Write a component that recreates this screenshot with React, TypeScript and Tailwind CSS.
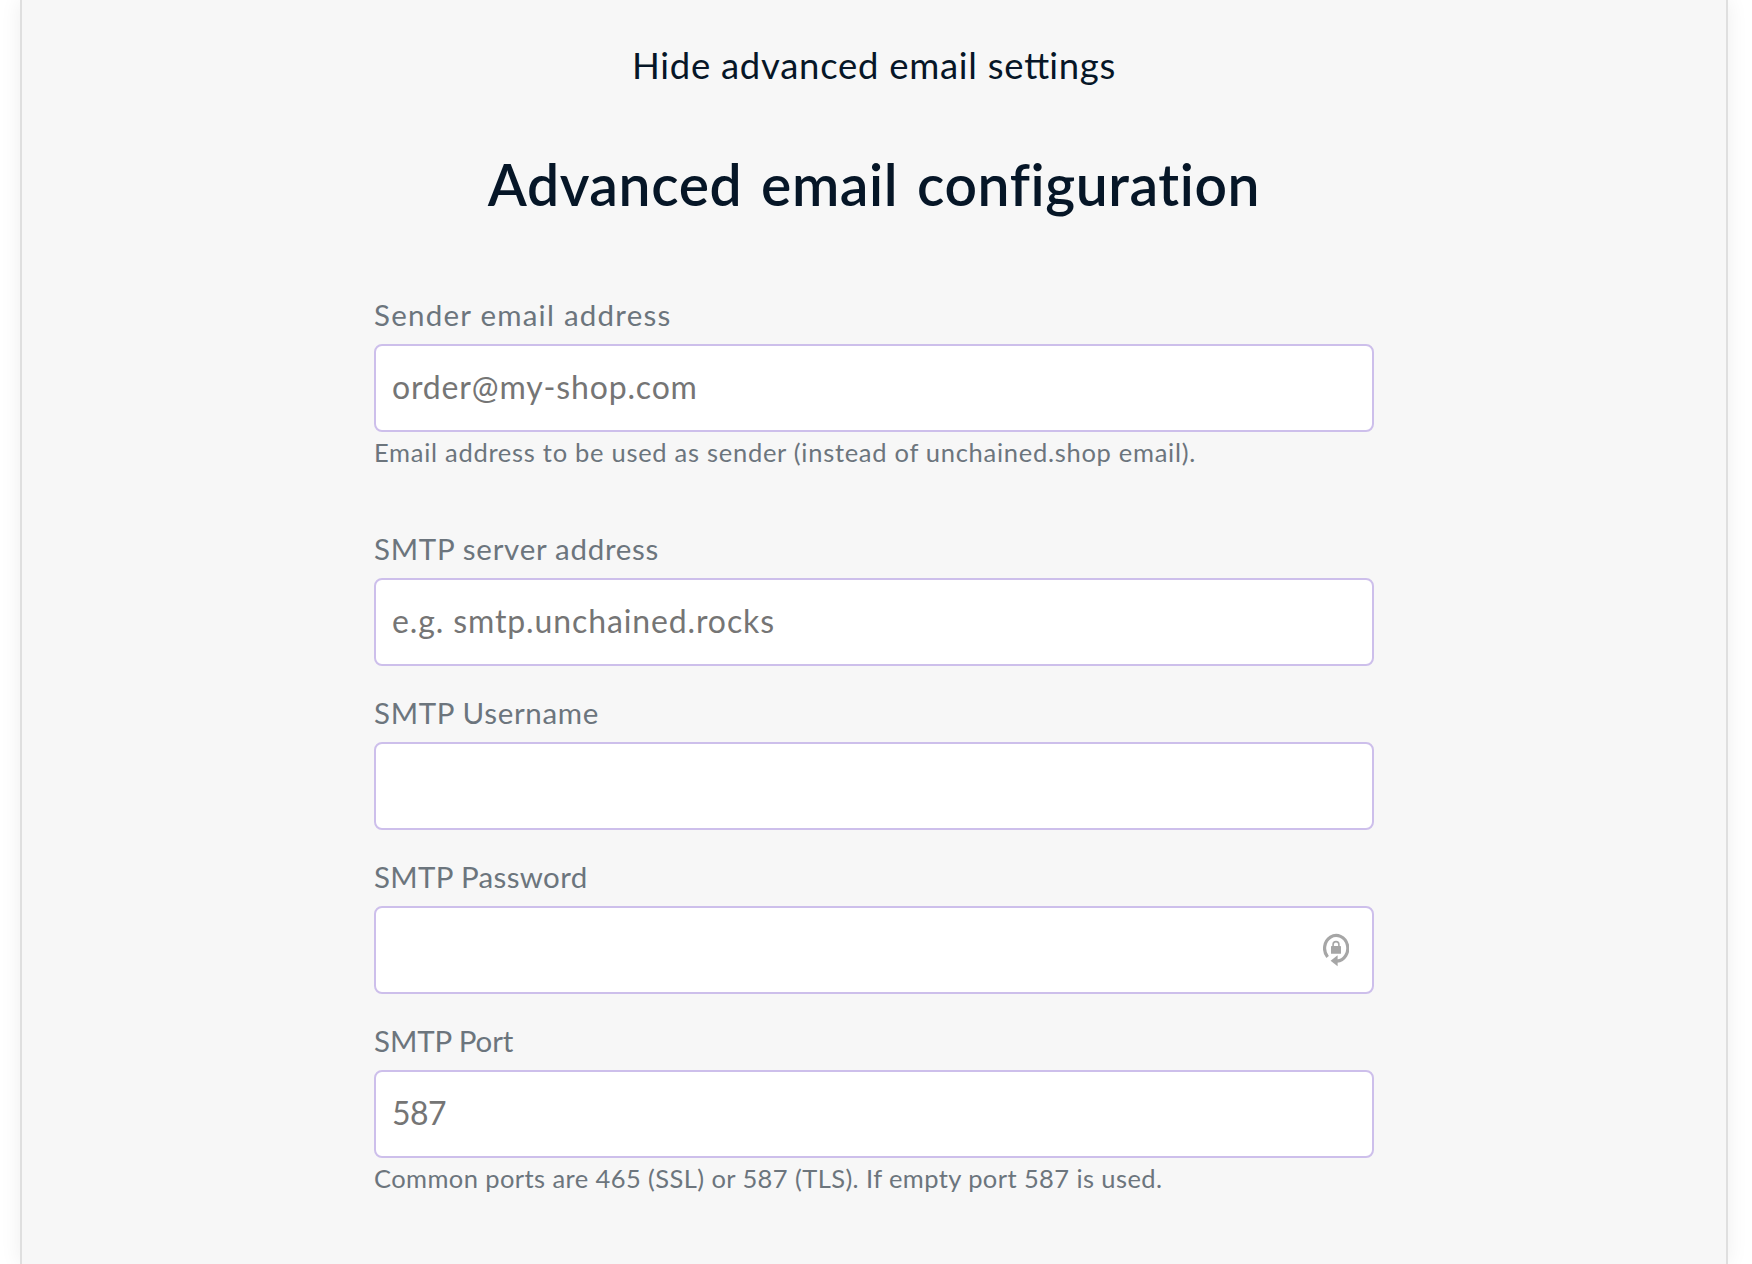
import React from "react";

type FieldProps = {
  id: string;
  label: string;
  labelClass: string;
  type?: string;
  placeholder?: string;
  inputClass?: string;
  help?: string;
  helpClass?: string;
  icon?: React.ReactNode;
};

function PasswordIcon() {
  return (
    <svg
      className="pointer-events-none absolute top-[27px] right-[25px] h-[34px] w-[26px]"
      viewBox="0 0 26 34"
      fill="none"
      aria-hidden="true"
    >
      <path
        d="M4.6 24A11.6 12.9 0 1 1 14 28.2"
        stroke="#a6a6a6"
        strokeWidth="3.2"
      />
      <path d="M7.6 27.8L14.6 22.2V33.2Z" fill="#a6a6a6" />
      <path
        d="M10.1 14V11.5a2.9 2.9 0 0 1 5.8 0V14"
        stroke="#a6a6a6"
        strokeWidth="1.6"
      />
      <rect x="8" y="13" width="10" height="7.8" rx="0.6" fill="#a6a6a6" />
    </svg>
  );
}

function Field({
  id,
  label,
  labelClass,
  type = "text",
  placeholder,
  inputClass = "",
  help,
  helpClass = "",
  icon,
}: FieldProps) {
  return (
    <div className="flex flex-col">
      <label
        htmlFor={id}
        className={`mb-[11px] block h-9 text-[29.5px] leading-9 whitespace-nowrap text-[#6c757d] ${labelClass}`}
      >
        {label}
      </label>
      <div className="relative">
        <input
          id={id}
          type={type}
          placeholder={placeholder}
          className={`block h-[88px] w-full rounded-lg border-2 border-[#cdbfeb] bg-white px-4 pb-[3px] text-[32px] text-[#757575] outline-none placeholder:text-[#757575] ${inputClass}`}
        />
        {icon}
      </div>
      {help && (
        <small
          className={`mt-0.5 block h-9 text-[25.5px] leading-9 whitespace-nowrap text-[#6c757d] ${helpClass}`}
        >
          {help}
        </small>
      )}
    </div>
  );
}

export default function App() {
  return (
    <div className="h-[1264px] overflow-hidden bg-white pr-6 pl-5 font-[Lato,sans-serif]">
      <main className="flex h-full flex-col items-center border-x-2 border-[#dfdfdf] bg-[#f7f7f7] shadow-[0_0_20px_rgba(0,0,0,0.07)]">
        <button
          type="button"
          className="mt-[43px] h-11 text-[36.5px] leading-[44px] tracking-[0.73px] whitespace-nowrap text-[#061627]"
        >
          Hide advanced email se<span className="tracking-normal">tt</span>ings
        </button>
        <h1 className="mt-[65px] h-16 text-[57px] leading-[64px] font-semibold tracking-[0.6px] [word-spacing:4px] whitespace-nowrap text-[#061627]">
          Advanced email configuration
        </h1>
        <form className="mt-[81px] flex w-[1000px] flex-col">
          <Field
            id="sender"
            label="Sender email address"
            labelClass="tracking-[1.24px]"
            placeholder="order@my-shop.com"
            inputClass="tracking-[0.84px]"
            help="Email address to be used as sender (instead of unchained.shop email)."
            helpClass="tracking-[0.72px]"
          />
          <div className="mt-[61px] flex flex-col gap-[29px]">
            <Field
              id="server"
              label="SMTP server address"
              labelClass="tracking-[0.72px]"
              placeholder="e.g. smtp.unchained.rocks"
              inputClass="tracking-[0.88px]"
            />
            <Field
              id="username"
              label="SMTP Username"
              labelClass="tracking-[0.66px]"
            />
            <Field
              id="password"
              label="SMTP Password"
              labelClass="tracking-[0.34px]"
              type="password"
              icon={<PasswordIcon />}
            />
            <Field
              id="port"
              label="SMTP Port"
              labelClass="tracking-[-0.1px]"
              placeholder="587"
              inputClass="tracking-[-0.5px]"
              help="Common ports are 465 (SSL) or 587 (TLS). If empty port 587 is used."
              helpClass="tracking-[0.41px]"
            />
          </div>
        </form>
      </main>
    </div>
  );
}
